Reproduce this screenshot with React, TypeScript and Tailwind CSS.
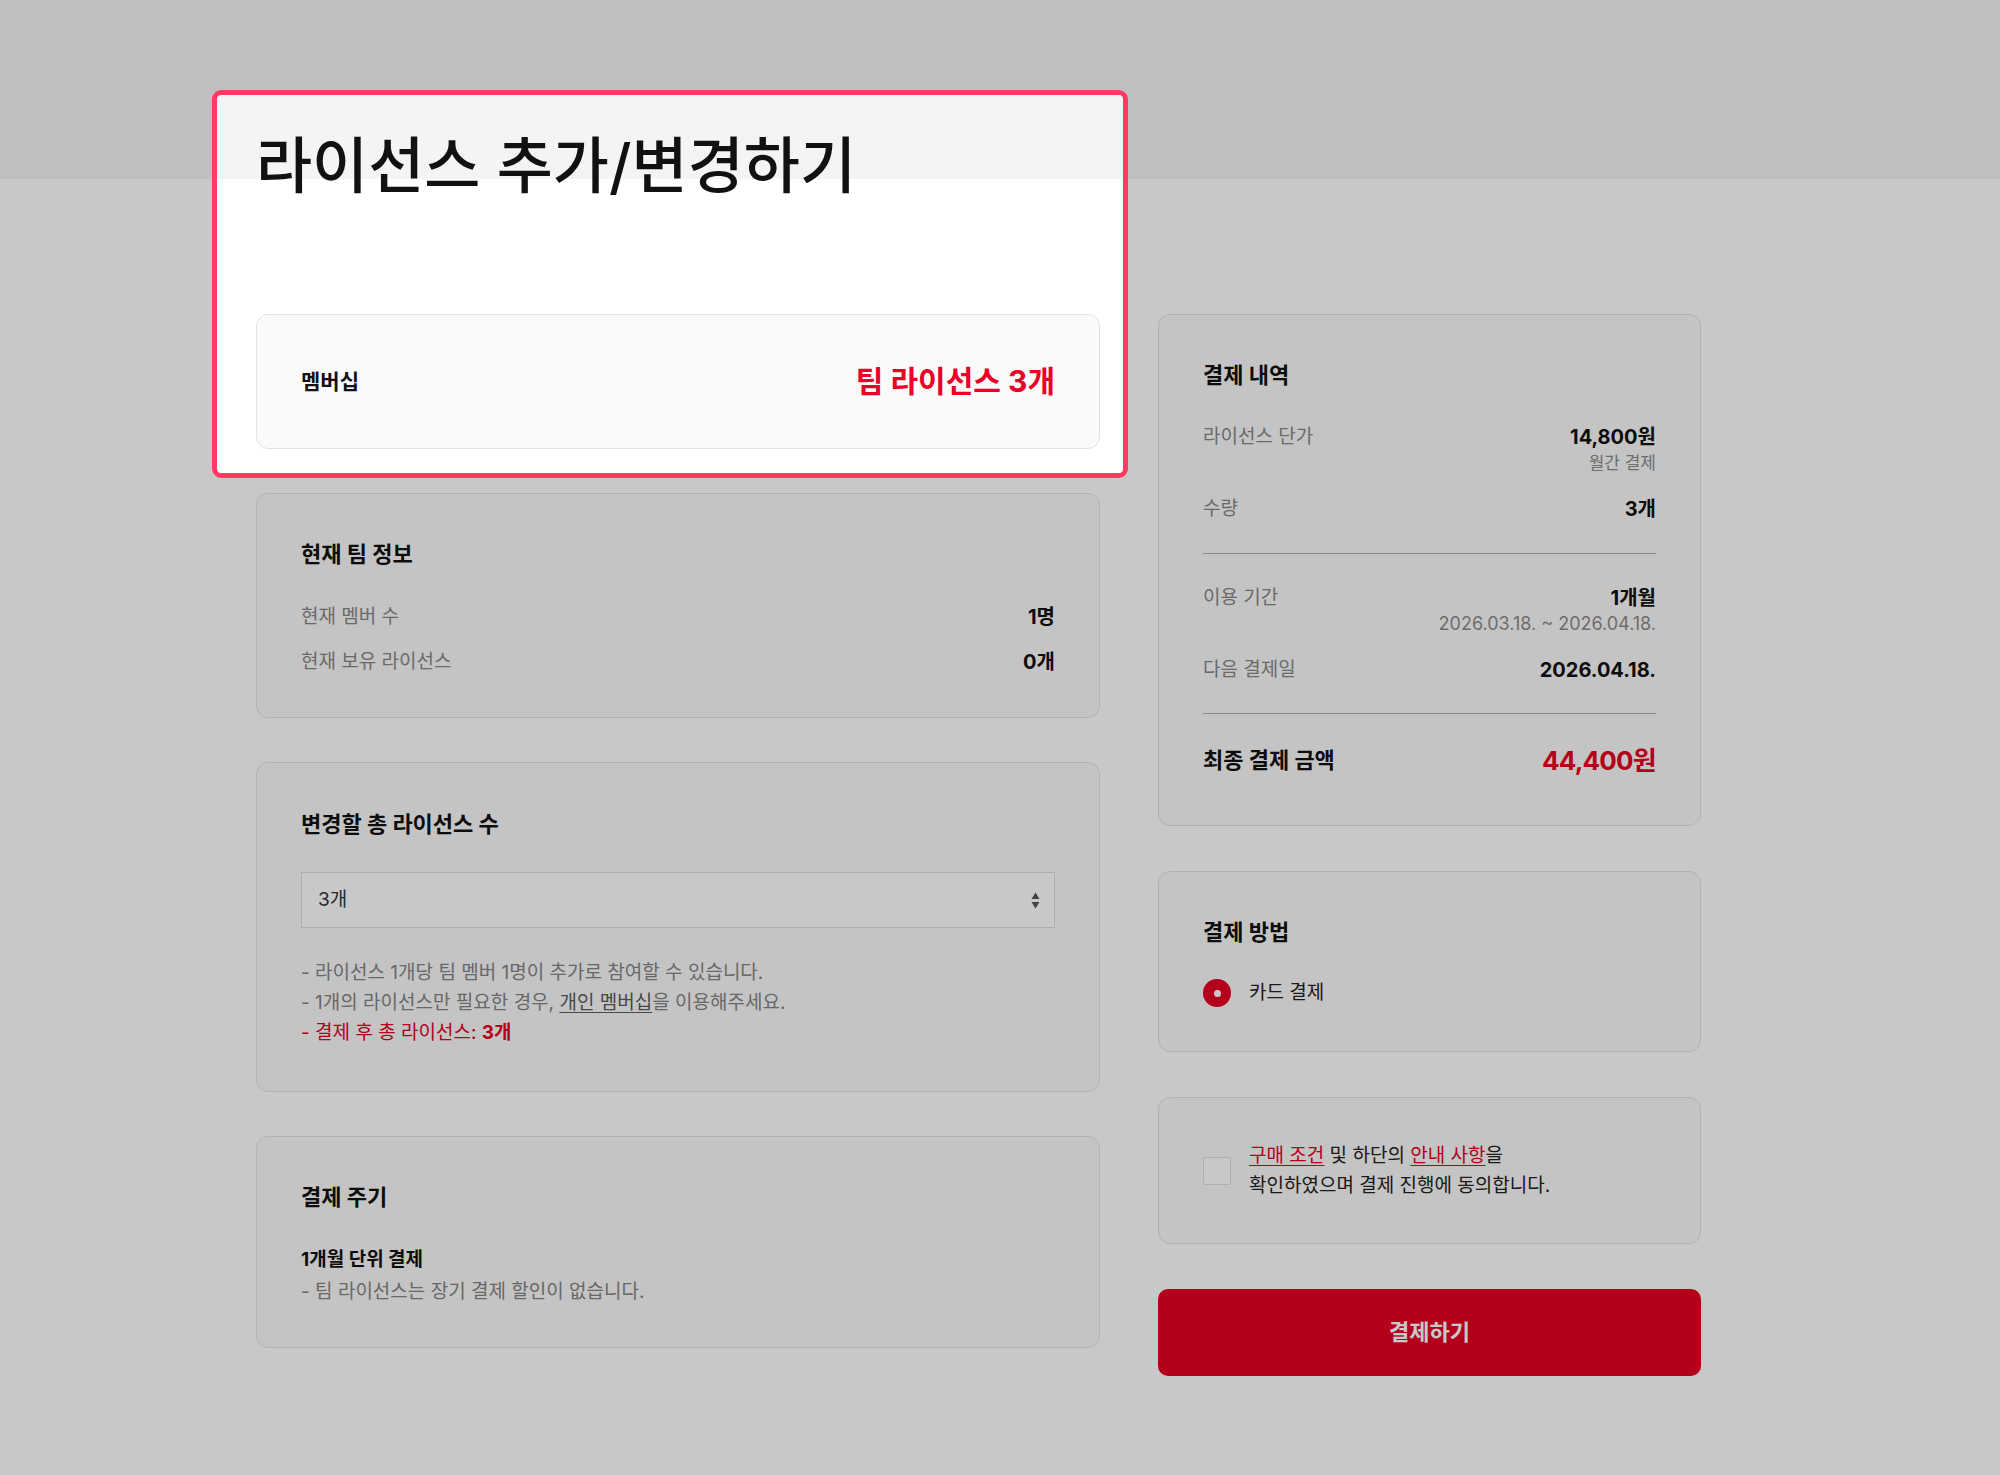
import type { ReactNode } from "react";

type CardProps = {
  className?: string;
  children: ReactNode;
};

function Card({ className = "", children }: CardProps) {
  return (
    <div className={`rounded-[12px] border border-[#e3e3e3] bg-[#fafafa] ${className}`}>
      {children}
    </div>
  );
}

function CardTitle({ children }: { children: ReactNode }) {
  return <h2 className="text-[22px] font-bold leading-[32px] text-[#111]">{children}</h2>;
}

function InfoRow({ label, value }: { label: string; value: string }) {
  return (
    <div className="flex items-center justify-between leading-[28px]">
      <span className="text-[#888]">{label}</span>
      <span className="text-[20px] font-bold text-[#111]">{value}</span>
    </div>
  );
}

function SelectArrows() {
  return (
    <svg width="9" height="17" viewBox="0 0 9 17" fill="#555">
      <path d="M4.5 0.5 8.5 7H0.5Z" />
      <path d="M4.5 16.5 0.5 10H8.5Z" />
    </svg>
  );
}

export default function App() {
  return (
    <div className="relative min-h-[1475px] overflow-hidden bg-[linear-gradient(to_bottom,#f3f4f6_179px,#ffffff_179px)] font-['Inter','Noto_Sans_CJK_KR',sans-serif] text-[19px] text-[#111]">
      <div className="pl-[256px] pt-[130px] pb-[100px]">
        <h1 className="h-[72px] text-[61px] font-medium leading-[72px] text-[#111]">
          라이선스 추가/변경하기
        </h1>

        <div className="mt-[112px] flex items-start gap-[58px]">
          {/* Left column */}
          <div className="flex w-[844px] flex-col gap-[44px]">
            <Card className="flex h-[135px] items-center justify-between px-[44px]">
              <span className="text-[21px] font-bold">멤버십</span>
              <span className="text-[30px] font-bold text-[#eb0028]">팀 라이선스 3개</span>
            </Card>

            <Card className="h-[225px] px-[44px] pt-[44px]">
              <CardTitle>현재 팀 정보</CardTitle>
              <div className="mt-[33px] flex flex-col gap-[17px]">
                <InfoRow label="현재 멤버 수" value="1명" />
                <InfoRow label="현재 보유 라이선스" value="0개" />
              </div>
            </Card>

            <Card className="h-[330px] px-[44px] pt-[45px]">
              <CardTitle>변경할 총 라이선스 수</CardTitle>
              <div className="mt-[32px] flex h-[56px] items-center justify-between border border-[#e0e0e0] bg-white pl-[16px] pr-[14px] text-[#333]">
                <span>3개</span>
                <SelectArrows />
              </div>
              <div className="mt-[30px] leading-[30px] text-[#858585]">
                <p>- 라이선스 1개당 팀 멤버 1명이 추가로 참여할 수 있습니다.</p>
                <p>
                  - 1개의 라이선스만 필요한 경우,{" "}
                  <span className="text-[#5c5c5c] underline underline-offset-[3px]">개인 멤버십</span>을
                  이용해주세요.
                </p>
                <p className="text-[#e60023]">
                  - 결제 후 총 라이선스: <span className="font-bold">3개</span>
                </p>
              </div>
            </Card>

            <Card className="h-[212px] px-[44px] pt-[44px]">
              <CardTitle>결제 주기</CardTitle>
              <div className="mt-[31px] leading-[32px]">
                <p className="font-bold text-[#111]">1개월 단위 결제</p>
                <p className="text-[#858585]">- 팀 라이선스는 장기 결제 할인이 없습니다.</p>
              </div>
            </Card>
          </div>

          {/* Right column */}
          <div className="flex w-[543px] flex-col gap-[45px]">
            <Card className="h-[512px] px-[44px] pt-[44px]">
              <CardTitle>결제 내역</CardTitle>
              <div className="mt-[32px]">
                <div className="flex justify-between">
                  <span className="leading-[28px] text-[#888]">라이선스 단가</span>
                  <div className="text-right">
                    <div className="text-[20px] font-bold leading-[28px]">14,800원</div>
                    <div className="text-[17px] leading-[24px] text-[#8c8c8c]">월간 결제</div>
                  </div>
                </div>
                <div className="mt-[20px]">
                  <InfoRow label="수량" value="3개" />
                </div>
              </div>
              <div className="mt-[30px] h-px bg-[#b0b0b0]" />
              <div className="mt-[30px]">
                <div className="flex justify-between">
                  <span className="leading-[28px] text-[#888]">이용 기간</span>
                  <div className="text-right">
                    <div className="text-[20px] font-bold leading-[28px]">1개월</div>
                    <div className="text-[18px] leading-[24px] text-[#8c8c8c]">
                      2026.03.18. ~ 2026.04.18.
                    </div>
                  </div>
                </div>
                <div className="mt-[20px]">
                  <InfoRow label="다음 결제일" value="2026.04.18." />
                </div>
              </div>
              <div className="mt-[29px] h-px bg-[#b0b0b0]" />
              <div className="mt-[28px] flex h-[36px] items-center justify-between">
                <span className="text-[22px] font-bold">최종 결제 금액</span>
                <span className="text-[26px] font-bold tracking-[-0.03em] text-[#e60023]">44,400원</span>
              </div>
            </Card>

            <Card className="h-[181px] px-[44px] pt-[44px]">
              <CardTitle>결제 방법</CardTitle>
              <div className="mt-[31px] flex items-center gap-[18px]">
                <span className="flex h-[28px] w-[28px] items-center justify-center rounded-full bg-[#e60023]">
                  <span className="h-[7px] w-[7px] rounded-full bg-white" />
                </span>
                <span className="text-[#222]">카드 결제</span>
              </div>
            </Card>

            <Card className="flex h-[147px] items-center gap-[18px] px-[44px]">
              <span className="h-[28px] w-[28px] shrink-0 rounded-[2px] border border-[#e0e0e0] bg-white" />
              <p className="leading-[30px] text-[#222]">
                <span className="text-[#e60023] underline underline-offset-[3px]">구매 조건</span> 및 하단의{" "}
                <span className="text-[#e60023] underline underline-offset-[3px]">안내 사항</span>을
                <br />
                확인하였으며 결제 진행에 동의합니다.
              </p>
            </Card>

            <button className="h-[87px] rounded-[10px] bg-[#e60023] text-[22px] font-bold text-white">
              결제하기
            </button>
          </div>
        </div>
      </div>

      {/* Tutorial spotlight */}
      <div className="pointer-events-none absolute left-[212px] top-[90px] h-[388px] w-[916px] rounded-[9px] border-[5px] border-[#ff3a63] shadow-[0_0_0_3000px_rgba(0,0,0,0.216)]" />
    </div>
  );
}
